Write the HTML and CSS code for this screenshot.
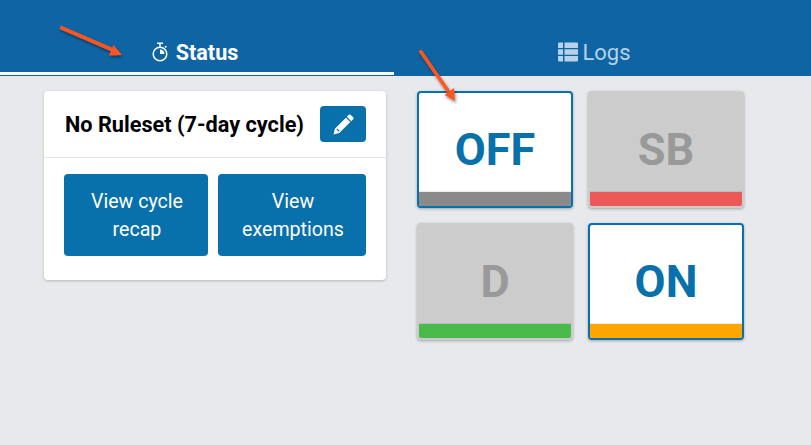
FILE: index.html
```html
<!DOCTYPE html>
<html lang="en">
<head>
  <meta charset="UTF-8" />
  <title>Status</title>
  <meta name="viewport" content="width=device-width, initial-scale=1.0" />
  <link rel="stylesheet" href="styles.css">
</head>
<body>

  <nav class="tabs">
    <a class="tab tab-active">
      <svg class="tab-icon" viewBox="0 0 16 20" width="16" height="20">
        <circle cx="8" cy="12" r="6.800" fill="none" stroke="currentColor" stroke-width="1.500"/>
        <path d="M8 12V7.500A4.500 4.500 0 0 1 12.500 12Z" fill="currentColor"/>
        <path d="M5 1.200h6M8 1.200v3.600M13 5.500l1.400-1.400" fill="none" stroke="currentColor" stroke-width="1.500"/>
      </svg>
      Status
    </a>
    <a class="tab">
      <svg class="tab-icon" viewBox="0 0 20 20" width="20" height="20" fill="currentColor">
        <path d="M0 1.500a1 1 0 0 1 1-1h4v5.500H0ZM6.500 .5H19a1 1 0 0 1 1 1V6H6.500ZM0 7.200h5v5.600H0ZM6.500 7.200H20v5.600H6.500ZM0 14h5v5.500H1a1 1 0 0 1-1-1ZM6.500 14H20v4.500a1 1 0 0 1-1 1H6.500Z"/>
      </svg>
      Logs
    </a>
  </nav>

  <main class="content">
    <section class="card">
      <div class="card-head">
        <h2>No Ruleset (7-day cycle)</h2>
        <button class="btn btn-edit" aria-label="Edit">
          <svg viewBox="0 0 20 20" width="21" height="21" fill="currentColor">
            <path d="M15 .8a1.300 1.300 0 0 1 1.800 0l2.400 2.400a1.300 1.300 0 0 1 0 1.800l-1.800 1.800-4.200-4.200Z"/>
            <path d="M12.300 3.500l4.200 4.200L6 18.200l-5.500 1.300 1.300-5.500ZM4 13.800l-.8.800 2.200 2.200.8-.8Z" fill-rule="evenodd"/>
          </svg>
        </button>
      </div>
      <div class="card-body">
        <button class="btn btn-cycle">View cycle recap</button>
        <button class="btn btn-exempt">View exemptions</button>
      </div>
    </section>

    <section class="tiles">
      <div class="tile tile-on"><span class="tile-label">OFF</span><span class="tile-bar bar-off"></span></div>
      <div class="tile"><span class="tile-label">SB</span><span class="tile-bar bar-sb"></span></div>
      <div class="tile"><span class="tile-label">D</span><span class="tile-bar bar-d"></span></div>
      <div class="tile tile-on"><span class="tile-label">ON</span><span class="tile-bar bar-on"></span></div>
    </section>
  </main>

  <!-- annotation arrows drawn over the screenshot -->
  <svg class="arrows" viewBox="0 0 811 445" width="811" height="445">
    <defs>
      <filter id="arrowShadow" x="-20%" y="-20%" width="140%" height="140%">
        <feDropShadow dx="1" dy="2" stdDeviation="1.500" flood-color="#000" flood-opacity="0.45"/>
      </filter>
    </defs>
    <g filter="url(#arrowShadow)" fill="#fb5522">
      <path d="M61 25.500L113 48 111.500 51.500 59.500 29Z"/>
      <path d="M122 55L109 55.500 113.500 45Z"/>
      <path d="M421.500 49.500L450 90.500 447 92.500 418.500 51.500Z"/>
      <path d="M455 101L444.500 95 454 88Z"/>
    </g>
  </svg>

</body>
</html>
```

FILE: styles.css
```css
body {
  margin: 0;
  font-family: Roboto, 'Liberation Sans', sans-serif;
  background: #e7e9ed;
  height: 445px;
  overflow: hidden;
  position: relative;
}

.tabs {
  display: flex;
  height: 76px;
  background: #0f65a3;
}

.tab {
  width: 400px;
  height: 75px;
  box-sizing: border-box;
  padding: 29px 0 0 1px;
  display: flex;
  align-items: center;
  justify-content: center;
  gap: 4px;
  font-size: 22px;
  color: #b5d2e8;
}

.tab-active {
  width: 394px;
  padding: 32px 4px 0 0;
  gap: 8px;
  color: white;
  font-weight: bold;
  font-size: 21.6px;
  border-bottom: 3px solid white;
}

.tab-icon {
  flex: none;
}

.content {
  display: flex;
  align-items: flex-start;
  padding: 15px 0 0 44px;
  gap: 31px;
}

.card {
  width: 342px;
  height: 189px;
  background: white;
  border-radius: 4px;
  box-shadow: 0 1px 3px rgba(0, 0, 0, 0.22);
}

.card-head {
  display: flex;
  align-items: center;
  justify-content: space-between;
  height: 66px;
  padding: 0 20px 0 21px;
  border-bottom: 1px solid #e1e3e7;
}

.card-head h2 {
  margin: 0;
  font-size: 21.7px;
  font-weight: bold;
  color: black;
}

.btn {
  border: none;
  border-radius: 4px;
  background: #0870aa;
  color: white;
  font-family: inherit;
  font-size: 19.6px;
  line-height: 28px;
  padding: 0;
}

.btn-edit {
  width: 46px;
  height: 36px;
  display: flex;
  align-items: center;
  justify-content: center;
}

.card-body {
  display: flex;
  gap: 10px;
  padding: 16px 20px 0;
}

.btn-cycle,
.btn-exempt {
  height: 82px;
  padding: 2px 19px 0 21px;
}

.btn-cycle {
  width: 144px;
}

.btn-exempt {
  width: 148px;
}

.tiles {
  display: grid;
  grid-template-columns: 156px 156px;
  grid-auto-rows: 117px;
  gap: 15px;
}

.tile {
  display: flex;
  flex-direction: column;
  box-sizing: border-box;
  border: 2px solid #cccccc;
  border-radius: 4px;
  background: #cccccc;
  box-shadow: 0 1px 3px rgba(0, 0, 0, 0.3);
  color: #999999;
}

.tile-on {
  background: white;
  border-color: #0870aa;
  color: #0870aa;
}

.tile-label {
  flex: 1;
  display: flex;
  align-items: center;
  justify-content: center;
  font-size: 45px;
  font-weight: bold;
  padding-top: 13px;
}

.tile-bar {
  height: 14px;
  border-radius: 0 0 2px 2px;
  box-shadow: 0 -1px 0 rgba(0, 0, 0, 0.08);
}

.bar-off { background: #8a8a8a; }
.bar-sb { background: #ec5757; }
.bar-d { background: #4aba4a; }
.bar-on { background: #ffa500; }

.arrows {
  position: absolute;
  top: 0;
  left: 0;
  pointer-events: none;
}
```
